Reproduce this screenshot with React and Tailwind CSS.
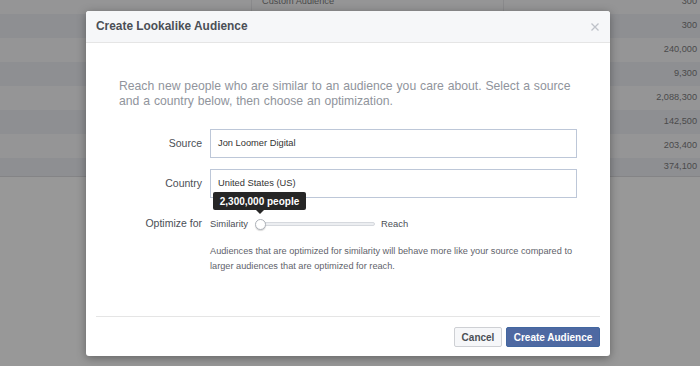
import React from 'react';

const rows = [
  { name: 'Custom Audience', size: '300', dark: false, h: 'h-[24px]' },
  { name: '', size: '300', dark: true, h: 'h-[24px]' },
  { name: '', size: '240,000', dark: false, h: 'h-[24px]' },
  { name: '', size: '9,300', dark: true, h: 'h-[24px]' },
  { name: '', size: '2,088,300', dark: false, h: 'h-[24px]' },
  { name: '', size: '142,500', dark: true, h: 'h-[24px]' },
  { name: '', size: '203,400', dark: false, h: 'h-[24px]' },
  { name: '', size: '374,100', dark: true, h: 'h-[18px]' },
];

// Dimmed audience table behind the dialog
const BackgroundTable = () => (
  <div className="-mt-[10px] border-b border-[#848486]">
    {rows.map((row, i) => (
      <div
        key={i}
        className={`flex ${row.h} ${row.dark ? 'bg-[#8e8f92]' : 'bg-[#959596]'} text-[9.2px] text-[#4a4a4b]`}
      >
        <div className="w-[252px] border-r border-[#8a8a8c]" />
        <div className="w-[252px] border-r border-[#8a8a8c] flex items-center pl-[10px]">
          {row.name}
        </div>
        <div className="flex-1 flex items-center justify-end pr-[3px]">{row.size}</div>
      </div>
    ))}
  </div>
);

const CloseIcon = () => (
  <svg width="8" height="8" viewBox="0 0 8 8" className="block">
    <path d="M0.5 0.5 L7.5 7.5 M7.5 0.5 L0.5 7.5" stroke="#bec2c9" strokeWidth="1.3" />
  </svg>
);

const Slider = () => (
  <div className="relative w-[120px] h-[12px]">
    {/* track */}
    <div className="absolute left-[4px] right-0 top-[4px] h-[4px] rounded-full bg-[#eceef1] border border-[#d6d9de]" />
    {/* knob */}
    <div className="absolute left-0 top-[0.5px] w-[11px] h-[11px] rounded-full bg-white border border-[#aeb3ba] shadow-[0_1px_1px_rgba(0,0,0,0.15)]" />
    {/* tooltip */}
    <div className="absolute left-[-42px] top-[-26px]">
      <div className="w-[93px] h-[18px] rounded-[2px] bg-[#262626] text-white font-bold text-[10px] flex items-center justify-center">
        2,300,000 people
      </div>
      <div className="ml-[43px] w-0 h-0 border-l-[4px] border-r-[4px] border-t-[4px] border-l-transparent border-r-transparent border-t-[#262626]" />
    </div>
  </div>
);

const Field = ({ label, value, className = '' }) => (
  <div className={`flex items-center ${className}`}>
    <div className="w-[116px] text-right text-[10.5px] text-[#4b4f56]">{label}</div>
    <div className="ml-[8px] mr-[33px] flex-1 h-[29px] border border-[#bdc7d8] bg-white flex items-center pl-[7px] text-[9.3px] text-[#333]">
      {value}
    </div>
  </div>
);

export default function App() {
  return (
    <div className="relative w-[700px] h-[366px] overflow-hidden bg-[#989898] font-['Liberation_Sans',Arial,sans-serif]">
      <BackgroundTable />

      {/* Dialog */}
      <div className="absolute left-[86px] top-[11px] w-[524px] h-[345px] bg-white rounded-[3px] shadow-[0_2px_10px_rgba(0,0,0,0.35)] flex flex-col overflow-hidden">
        <div className="h-[32px] bg-[#f6f7f9] border-b border-[#e5e5e5] flex items-center justify-between pl-[10px] pr-[11px]">
          <span className="text-[11.9px] font-bold text-[#4b4f56]">Create Lookalike Audience</span>
          <CloseIcon />
        </div>

        <div className="flex-1 flex flex-col pt-[36px]">
          <p className="px-[33px] text-[12.2px] leading-[15px] text-[#90949c] [word-spacing:0.5px]">
            Reach new people who are similar to an audience you care about. Select a source and a country below, then choose an optimization.
          </p>

          <Field label="Source" value="Jon Loomer Digital" className="mt-[20px]" />
          <Field label="Country" value="United States (US)" className="mt-[11px]" />

          <div className="flex items-center mt-[20px] h-[12px]">
            <div className="w-[116px] text-right text-[10.5px] text-[#4b4f56]">Optimize for</div>
            <span className="ml-[8px] w-[45px] text-[9.4px] text-[#4b4f56]">Similarity</span>
            <Slider />
            <span className="ml-[6px] text-[9.4px] text-[#4b4f56]">Reach</span>
          </div>

          <p className="mt-[14px] ml-[124px] mr-[30px] text-[9.2px] leading-[15px] text-[#5f636b]">
            Audiences that are optimized for similarity will behave more like your source compared to larger audiences that are optimized for reach.
          </p>
        </div>

        <div className="mx-[10px] border-t border-[#e5e5e5] pt-[10px] pb-[9px] flex justify-end gap-[4px]">
          <button className="h-[20px] w-[48px] rounded-[2px] border border-[#ced0d4] bg-[#f6f7f9] text-[10px] font-bold text-[#4b4f56]">
            Cancel
          </button>
          <button className="h-[20px] w-[94px] rounded-[2px] border border-[#4267a0] bg-[#4e69a2] text-[10px] font-bold text-white">
            Create Audience
          </button>
        </div>
      </div>
    </div>
  );
}
